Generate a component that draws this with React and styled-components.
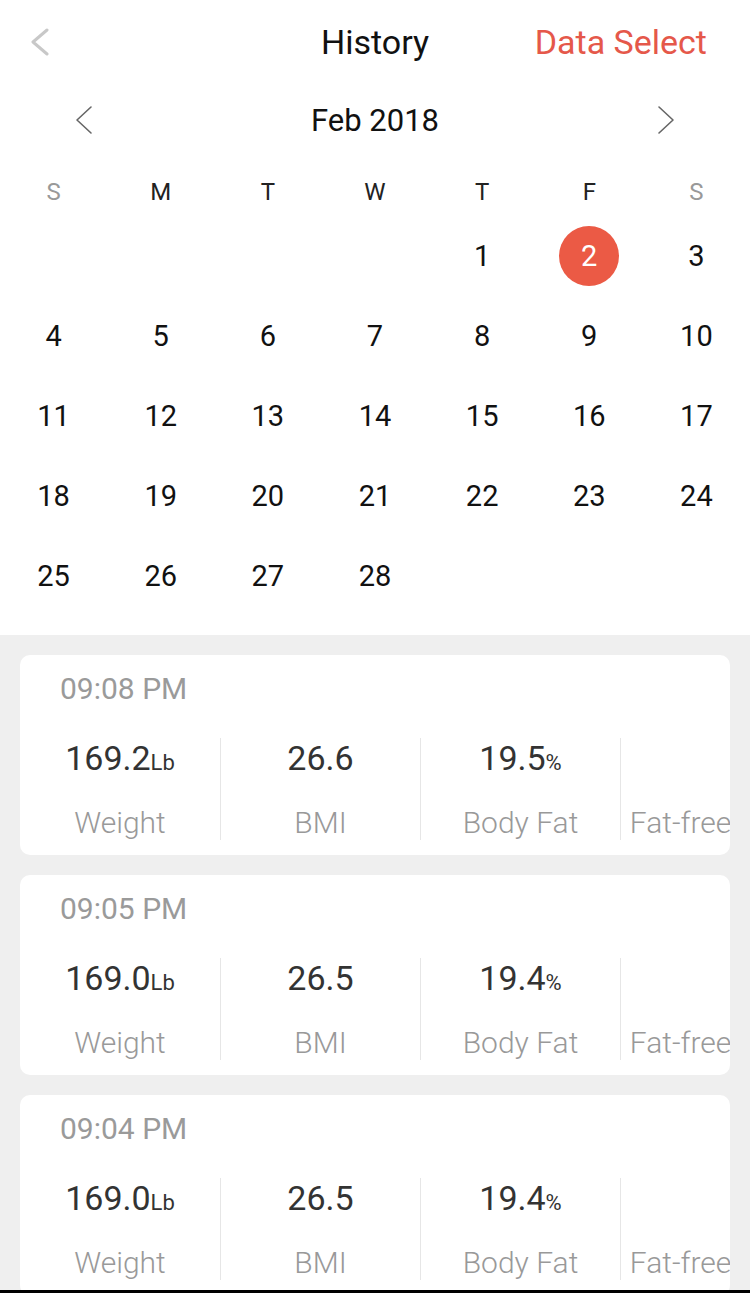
import styled, { createGlobalStyle } from "styled-components";

const GlobalStyle = createGlobalStyle`
  html, body {
    margin: 0;
    padding: 0;
    background: #fff;
  }
  body {
    font-family: Roboto, "Liberation Sans", sans-serif;
  }
`;

const Screen = styled.div`
  width: 750px;
  height: 1293px;
  box-sizing: border-box;
  border-bottom: 3px solid #000;
  overflow: hidden;
  background: #efefef;
  display: flex;
  flex-direction: column;
`;

const Top = styled.div`
  background: #fff;
  padding-bottom: 19px;
`;

const Header = styled.div`
  height: 84px;
  display: grid;
  grid-template-columns: 1fr auto 1fr;
  align-items: center;
  padding: 0 43px;
`;

const Back = styled.div`
  display: flex;
  align-items: center;
  margin-left: -12px;
`;

const Title = styled.div`
  font-size: 34px;
  color: #111;
`;

const Action = styled.div`
  justify-self: end;
  font-size: 34px;
  color: #e5584a;
`;

const MonthRow = styled.div`
  height: 72px;
  display: flex;
  align-items: center;
  justify-content: space-between;
  padding: 0 75px;
`;

const Month = styled.div`
  font-size: 31px;
  color: #111;
`;

const Grid = styled.div`
  display: grid;
  grid-template-columns: repeat(7, 1fr);
`;

const Weekday = styled.div`
  height: 49px;
  margin-top: 11px;
  display: flex;
  align-items: center;
  justify-content: center;
  font-size: 24px;
  color: ${(p) => (p.$weekend ? "#999" : "#222")};
`;

const Day = styled.div`
  height: 80px;
  display: flex;
  align-items: center;
  justify-content: center;
  font-size: 29px;
  color: #111;
`;

const Selected = styled.span`
  width: 60px;
  height: 60px;
  border-radius: 50%;
  background: #eb5a45;
  color: #fff;
  display: flex;
  align-items: center;
  justify-content: center;
`;

const List = styled.div`
  padding: 20px;
  display: flex;
  flex-direction: column;
  gap: 20px;
`;

const Card = styled.div`
  background: #fff;
  border-radius: 10px;
  height: 200px;
  flex-shrink: 0;
  overflow: hidden;
  display: flex;
  flex-direction: column;
`;

const Time = styled.div`
  font-size: 30px;
  color: #9a9a9a;
  padding: 16px 0 0 40px;
  height: 63px;
  box-sizing: border-box;
`;

const Stats = styled.div`
  display: flex;
  padding-top: 20px;
`;

const Stat = styled.div`
  width: 200px;
  flex-shrink: 0;
  height: 102px;
  display: flex;
  flex-direction: column;
  align-items: center;
  box-sizing: border-box;
  border-left: ${(p) => (p.$first ? "none" : "1px solid #e6e6e6")};
`;

const Value = styled.div`
  font-size: 34px;
  color: #333;
  height: 42px;
  white-space: nowrap;
`;

const Unit = styled.span`
  font-size: 22px;
`;

const Label = styled.div`
  font-size: 30px;
  font-weight: 300;
  color: #999;
  margin-top: 25px;
  white-space: nowrap;
`;

const Chevron = ({ dir = "left", color, width = 16, height = 28, stroke = 2 }) => (
  <svg width={width} height={height} viewBox={`0 0 ${width} ${height}`} fill="none">
    <path
      d={
        dir === "left"
          ? `M${width - 2} 2 L2 ${height / 2} L${width - 2} ${height - 2}`
          : `M2 2 L${width - 2} ${height / 2} L2 ${height - 2}`
      }
      stroke={color}
      strokeWidth={stroke}
      strokeLinecap="round"
      strokeLinejoin="round"
    />
  </svg>
);

const weekdays = ["S", "M", "T", "W", "T", "F", "S"];
const days = [null, null, null, null, 1, 2, 3];
for (let d = 4; d <= 28; d++) days.push(d);

const records = [
  { time: "09:08 PM", weight: "169.2", bmi: "26.6", fat: "19.5" },
  { time: "09:05 PM", weight: "169.0", bmi: "26.5", fat: "19.4" },
  { time: "09:04 PM", weight: "169.0", bmi: "26.5", fat: "19.4" },
];

export default function App() {
  return (
    <>
      <GlobalStyle />
      <Screen>
        <Top>
          <Header>
            <Back>
              <Chevron color="#c8c8c8" width={18} height={28} stroke={3} />
            </Back>
            <Title>History</Title>
            <Action>Data Select</Action>
          </Header>
          <MonthRow>
            <Chevron color="#666" width={18} height={30} stroke={1.6} />
            <Month>Feb 2018</Month>
            <Chevron dir="right" color="#666" width={18} height={30} stroke={1.6} />
          </MonthRow>
          <Grid>
            {weekdays.map((w, i) => (
              <Weekday key={i} $weekend={i === 0 || i === 6}>
                {w}
              </Weekday>
            ))}
            {days.map((d, i) => (
              <Day key={i}>{d === 2 ? <Selected>2</Selected> : d}</Day>
            ))}
          </Grid>
        </Top>
        <List>
          {records.map((r, i) => (
            <Card key={i}>
              <Time>{r.time}</Time>
              <Stats>
                <Stat $first>
                  <Value>
                    {r.weight}
                    <Unit>Lb</Unit>
                  </Value>
                  <Label>Weight</Label>
                </Stat>
                <Stat>
                  <Value>{r.bmi}</Value>
                  <Label>BMI</Label>
                </Stat>
                <Stat>
                  <Value>
                    {r.fat}
                    <Unit>%</Unit>
                  </Value>
                  <Label>Body Fat</Label>
                </Stat>
                <Stat>
                  <Value />
                  <Label>Fat-free Mass</Label>
                </Stat>
              </Stats>
            </Card>
          ))}
        </List>
      </Screen>
    </>
  );
}
